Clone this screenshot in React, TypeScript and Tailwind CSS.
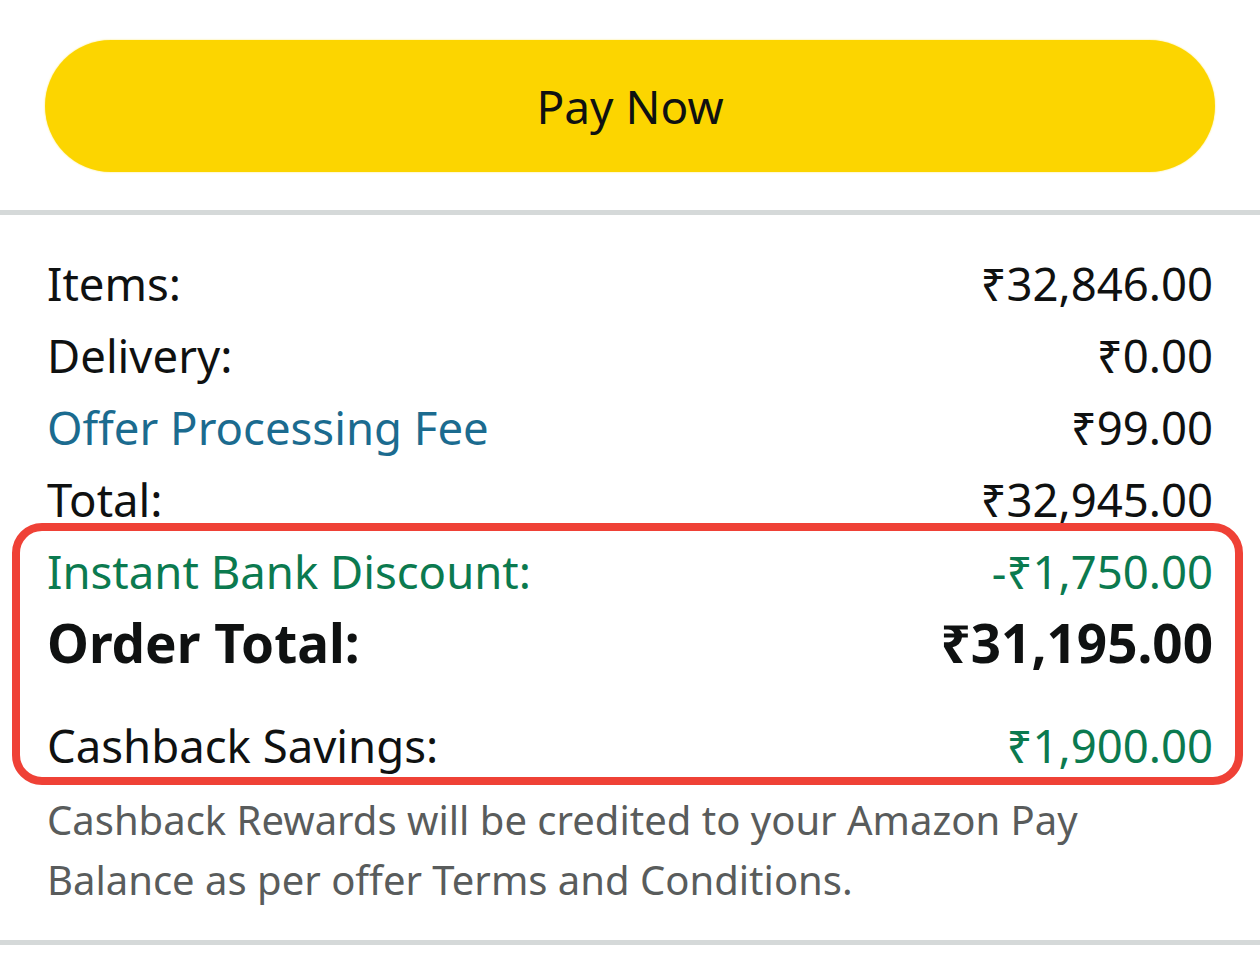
const rows = [
  { label: 'Items:', value: '₹32,846.00', tone: 'text-[#0f1111]' },
  { label: 'Delivery:', value: '₹0.00', tone: 'text-[#0f1111]' },
  { label: 'Offer Processing Fee', value: '₹99.00', tone: 'text-[#0f1111]', link: true },
  { label: 'Total:', value: '₹32,945.00', tone: 'text-[#0f1111]' },
];

export default function App() {
  return (
    <div
      className="min-h-screen bg-white text-[#0f1111]"
      style={{ fontFamily: '"Noto Sans", "Open Sans", sans-serif' }}
    >
      <div className="px-[45px] pt-[40px] pb-[38px]">
        <button className="w-full h-[132px] rounded-full bg-[#fcd500] text-[46px] text-[#0f1111] shadow-[0_0_2px_rgba(252,213,0,0.6)]">
          Pay Now
        </button>
      </div>
      <div className="h-[5px] bg-[#d5d9d9]" />

      <div className="px-[47px] pt-[32px]">
        {rows.map((r) => (
          <div key={r.label} className="flex items-center justify-between h-[72px] text-[45.5px]">
            <span className={r.link ? 'text-[#1b6b8f]' : ''}>{r.label}</span>
            <span>{r.value}</span>
          </div>
        ))}

        <div className="relative">
          <div className="pointer-events-none absolute -top-[12px] -left-[35px] -right-[30px] -bottom-[4px] rounded-[30px] border-[8px] border-[#ef4136]" />
          <div className="flex items-center justify-between h-[72px] text-[45.5px] text-[#0b7a4f]">
            <span>Instant Bank Discount:</span>
            <span>-₹1,750.00</span>
          </div>
          <div className="flex items-center justify-between h-[72px] text-[53px] font-bold">
            <span>Order Total:</span>
            <span>₹31,195.00</span>
          </div>
          <div className="flex items-center justify-between h-[72px] mt-[30px] text-[45.5px]">
            <span>Cashback Savings:</span>
            <span className="text-[#0b7a4f]">₹1,900.00</span>
          </div>
        </div>

        <p className="mt-[9px] text-[40px] leading-[60px] text-[#595c5c]">
          Cashback Rewards will be credited to your Amazon Pay
          <br />
          Balance as per offer Terms and Conditions.
        </p>
      </div>

      <div className="mt-[30px] h-[5px] bg-[#d5d9d9]" />
    </div>
  );
}
